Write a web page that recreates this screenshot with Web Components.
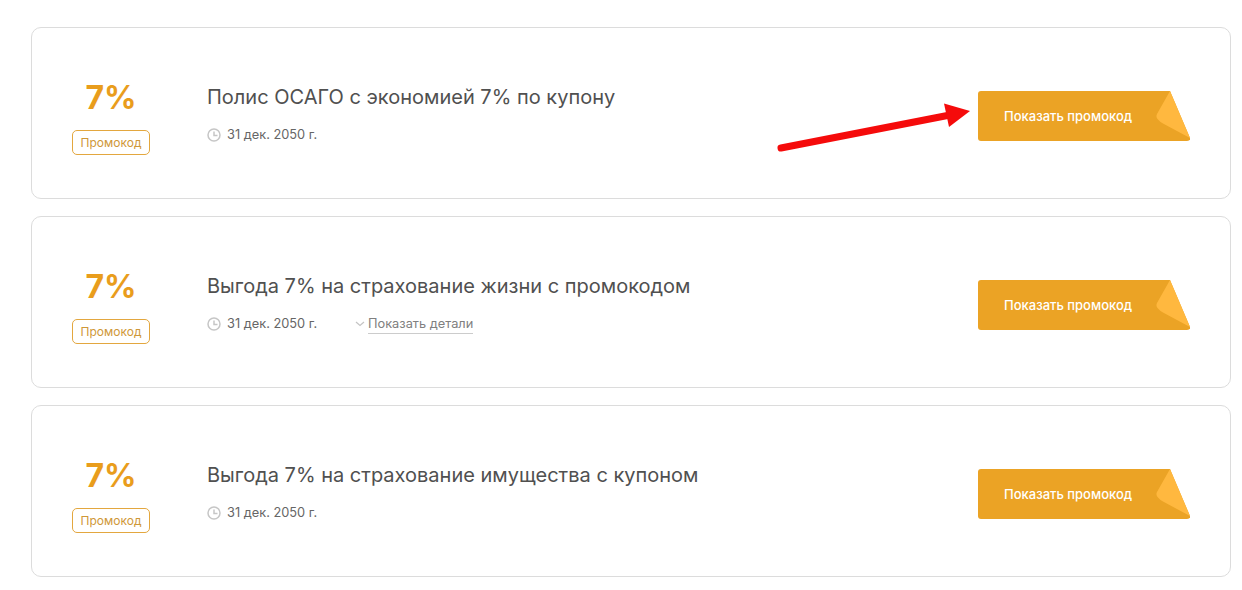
<!DOCTYPE html>
<html lang="ru">
<head>
<meta charset="utf-8">
<title>Промокоды</title>
<style>
    html, body { margin: 0; padding: 0; background: #fff; }
    body { font-family: Inter, "Liberation Sans", sans-serif; }
</style>
</head>
<body>
<coupon-list>
    <coupon-card discount="7%" date="31 дек. 2050 г." arrow>Полис ОСАГО с экономией 7% по купону</coupon-card>
    <coupon-card discount="7%" date="31 дек. 2050 г." details>Выгода 7% на страхование жизни с промокодом</coupon-card>
    <coupon-card discount="7%" date="31 дек. 2050 г.">Выгода 7% на страхование имущества с купоном</coupon-card>
</coupon-list>

<script>
class CouponList extends HTMLElement {
    constructor() {
        super();
        this.attachShadow({ mode: 'open' });
        this.shadowRoot.innerHTML = `
            <style>
                :host {
                    display: flex;
                    flex-direction: column;
                    gap: 17px;
                    width: 1200px;
                    padding: 27px 11px 0 31px;
                }
            </style>
            <slot></slot>
        `;
    }
}

class PromoButton extends HTMLElement {
    constructor() {
        super();
        this.attachShadow({ mode: 'open' });
        this.shadowRoot.innerHTML = `
            <style>
                :host {
                    display: block;
                    position: relative;
                    width: 212px;
                    height: 50px;
                    cursor: pointer;
                }
                svg { display: block; }
                .label {
                    position: absolute;
                    left: 26px;
                    top: 0;
                    line-height: 50px;
                    font-size: 13px;
                    font-weight: 500;
                    color: #fff;
                    white-space: nowrap;
                }
            </style>
            <svg width="212" height="50" viewBox="0 0 212 50">
                <path d="M3 0H192L212 47Q212.500 50 209 50H3Q0 50 0 47V3Q0 0 3 0Z" fill="#eba325"/>
                <path d="M192 0L179 23Q177.500 26 180 28.500Q182 31 185 32.500L212 47Z" fill="#ffb83f"/>
            </svg>
            <span class="label"><slot></slot></span>
        `;
    }
}

class CouponCard extends HTMLElement {
    constructor() {
        super();
        this.attachShadow({ mode: 'open' });
    }

    getStyles() {
        return `
            <style>
                :host {
                    display: flex;
                    align-items: center;
                    position: relative;
                    box-sizing: border-box;
                    height: 172px;
                    border: 1px solid #dcdcdc;
                    border-radius: 10px;
                    background: #fff;
                    color: #555;
                }
                .value {
                    display: flex;
                    flex-direction: column;
                    align-items: center;
                    width: 156px;
                    margin-left: 1px;
                    margin-top: 7px;
                    flex: none;
                }
                .percent {
                    font-size: 32px;
                    line-height: 40px;
                    font-weight: 700;
                    color: #e99d1c;
                }
                .tag {
                    margin-top: 12px;
                    box-sizing: border-box;
                    height: 25px;
                    padding: 0 8px;
                    border: 1px solid #e3a73f;
                    border-radius: 5px;
                    font-size: 12px;
                    line-height: 24px;
                    color: #cf9838;
                }
                .body {
                    flex: 1;
                    padding-left: 18px;
                    padding-top: 3px;
                }
                .title {
                    font-size: 20px;
                    line-height: 24px;
                    font-weight: 400;
                    color: #505050;
                    margin: 0;
                }
                .meta {
                    display: flex;
                    align-items: center;
                    margin-top: 16px;
                    height: 20px;
                    font-size: 12.8px;
                    color: #666;
                }
                .meta svg { flex: none; }
                .date { margin-left: 6px; width: 128px; }
                .more {
                    display: flex;
                    align-items: center;
                    gap: 3px;
                }
                .more span {
                    color: #808080;
                    border-bottom: 1px solid #ccc;
                    line-height: 19px;
                    margin-top: 1px;
                }
                promo-button { margin-right: 40px; margin-top: 6px; flex: none; }
                .arrow {
                    position: absolute;
                    left: 740px;
                    top: 70px;
                }
            </style>
        `;
    }

    getTemplate() {
        const template = document.createElement('template');
        const details = this.hasAttribute('details') ? `
            <div class="more">
                <svg width="10" height="6" viewBox="0 0 10 6"><path d="M1 1l4 3.500L9 1" fill="none" stroke="#c4c4c4" stroke-width="1.200"/></svg>
                <span>Показать детали</span>
            </div>` : '';
        const arrow = this.hasAttribute('arrow') ? `
            <svg class="arrow" width="200" height="60" viewBox="0 0 200 60">
                <path d="M9 50L178 17" stroke="#f50b0b" stroke-width="7" stroke-linecap="round" fill="none"/>
                <path d="M172 5.500L198 13L177 29Z" fill="#f50b0b"/>
            </svg>` : '';

        template.innerHTML = `
            ${this.getStyles()}
            <div class="value">
                <div class="percent">${this.getAttribute('discount')}</div>
                <div class="tag">Промокод</div>
            </div>
            <div class="body">
                <h3 class="title"><slot></slot></h3>
                <div class="meta">
                    <svg width="14" height="14" viewBox="0 0 14 14" fill="none" stroke="#c6c6c6" stroke-width="1.500">
                        <circle cx="7" cy="7" r="6"/>
                        <path d="M7 3.500V7.500H10.500"/>
                    </svg>
                    <div class="date">${this.getAttribute('date')}</div>
                    ${details}
                </div>
            </div>
            <promo-button>Показать промокод</promo-button>
            ${arrow}
        `;

        return template;
    }

    connectedCallback() {
        if (!this.shadowRoot.hasChildNodes()) {
            this.shadowRoot.appendChild(this.getTemplate().content.cloneNode(true));
        }
    }
}

customElements.define('promo-button', PromoButton);
customElements.define('coupon-card', CouponCard);
customElements.define('coupon-list', CouponList);
</script>
</body>
</html>
